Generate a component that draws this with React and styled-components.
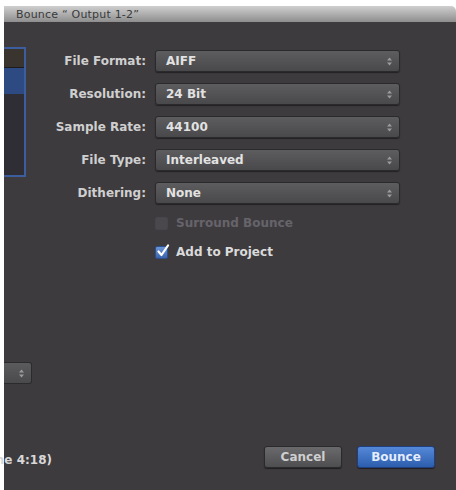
import React from 'react';
import styled, { createGlobalStyle } from 'styled-components';

const GlobalStyle = createGlobalStyle`
  html, body {
    margin: 0;
    padding: 0;
    background: #fff;
  }
  body {
    font-family: "DejaVu Sans", "Liberation Sans", sans-serif;
  }
`;

const Window = styled.div`
  width: 456px;
  height: 490px;
  padding: 6px 0 0 4px;
  box-sizing: border-box;
  display: flex;
  flex-direction: column;
  overflow: hidden;
`;

const TitleBar = styled.div`
  height: 16px;
  flex: none;
  background: linear-gradient(#cfcfcf, #8e8e8e);
  border-top-right-radius: 5px;
  display: flex;
  align-items: center;
  padding-left: 12px;
  font-size: 11px;
  letter-spacing: 0.2px;
  color: #3a3a3a;
`;

const Body = styled.div`
  flex: 1;
  background: #3e3b3f;
  display: flex;
`;

const LeftCol = styled.div`
  width: 50px;
  flex: none;
  display: flex;
  flex-direction: column;
  padding-top: 25px;
`;

const ListPanel = styled.div`
  width: 22px;
  height: 130px;
  box-sizing: border-box;
  border: 2px solid #3d5e9e;
  border-left: none;
  display: flex;
  flex-direction: column;
  background: #2f2e35;
`;

const ListHeader = styled.div`
  height: 18px;
  background: #3a342f;
  border-bottom: 1px solid #1e1c1c;
`;

const ListSelected = styled.div`
  height: 26px;
  background: #2d4a82;
`;

const MiniSelect = styled.div`
  margin-top: 185px;
  width: 28px;
  height: 22px;
  box-sizing: border-box;
  background: linear-gradient(#5b5a5c, #4a494b);
  border: 1px solid #2b2a2c;
  border-left: none;
  border-radius: 0 3px 3px 0;
  display: flex;
  align-items: center;
  justify-content: flex-end;
  padding-right: 6px;
`;

const TimeText = styled.div`
  margin-top: auto;
  margin-bottom: 23px;
  margin-left: -4px;
  width: 52px;
  font-size: 12px;
  font-weight: bold;
  color: #d8d8d8;
  white-space: nowrap;
  direction: rtl;
  overflow: hidden;
`;

const Main = styled.div`
  flex: 1;
  display: flex;
  flex-direction: column;
  padding-top: 28px;
`;

const Form = styled.div`
  display: grid;
  grid-template-columns: 92px 245px;
  column-gap: 9px;
  row-gap: 11px;
  align-items: center;
`;

const Label = styled.div`
  text-align: right;
  font-size: 12px;
  font-weight: bold;
  color: #cfcfcf;
  white-space: nowrap;
`;

const Select = styled.div`
  height: 22px;
  box-sizing: border-box;
  background: linear-gradient(#5d5c5e, #49484a);
  border: 1px solid #2a292b;
  border-radius: 3px;
  box-shadow: 0 1px 1px rgba(0, 0, 0, 0.45);
  display: flex;
  align-items: center;
  justify-content: space-between;
  padding: 0 6px 0 10px;
  font-size: 12px;
  font-weight: bold;
  color: #e2e2e2;
`;

const Checks = styled.div`
  display: flex;
  flex-direction: column;
  gap: 15px;
  margin-top: 12px;
  margin-left: 101px;
`;

const CheckRow = styled.div`
  display: flex;
  align-items: center;
  gap: 8px;
  font-size: 12px;
  font-weight: bold;
  color: ${p => (p.$disabled ? '#66646a' : '#dadada')};
`;

const Box = styled.div`
  width: 13px;
  height: 13px;
  box-sizing: border-box;
  border-radius: 2px;
  position: relative;
  border: 1px solid ${p => (p.$checked ? '#2c4f8e' : '#474549')};
  background: ${p => (p.$checked ? 'linear-gradient(#6d95d6, #3b64ad)' : '#4a484c')};
`;

const Tick = styled.svg`
  position: absolute;
  left: 0px;
  top: -3px;
`;

const Footer = styled.div`
  margin-top: auto;
  margin-bottom: 22px;
  display: flex;
  gap: 15px;
  padding-left: 210px;
`;

const Button = styled.div`
  width: 78px;
  height: 22px;
  box-sizing: border-box;
  border-radius: 3px;
  display: flex;
  align-items: center;
  justify-content: center;
  font-size: 12px;
  font-weight: bold;
  box-shadow: 0 1px 1px rgba(0, 0, 0, 0.5);
  color: ${p => (p.$primary ? '#e4ecff' : '#cfcfcf')};
  border: 1px solid ${p => (p.$primary ? '#1f3f7e' : '#2a292b')};
  background: ${p =>
    p.$primary ? 'linear-gradient(#5588d8, #2c5ead)' : 'linear-gradient(#6a696b, #4e4d4f)'};
`;

const Chevrons = () => (
  <svg width="7" height="11" viewBox="0 0 7 11">
    <path d="M1 4.5 L3.5 1.5 L6 4.5 Z" fill="#9c9b9d" />
    <path d="M1 6.5 L3.5 9.5 L6 6.5 Z" fill="#9c9b9d" />
  </svg>
);

const fields = [
  ['File Format:', 'AIFF'],
  ['Resolution:', '24 Bit'],
  ['Sample Rate:', '44100'],
  ['File Type:', 'Interleaved'],
  ['Dithering:', 'None'],
];

export default function App() {
  return (
    <>
      <GlobalStyle />
      <Window>
        <TitleBar>Bounce “ Output 1-2”</TitleBar>
        <Body>
          <LeftCol>
            <ListPanel>
              <ListHeader />
              <ListSelected />
            </ListPanel>
            <MiniSelect>
              <Chevrons />
            </MiniSelect>
            <TimeText>(Time 4:18)</TimeText>
          </LeftCol>
          <Main>
            <Form>
              {fields.map(([label, value]) => (
                <React.Fragment key={label}>
                  <Label>{label}</Label>
                  <Select>
                    {value}
                    <Chevrons />
                  </Select>
                </React.Fragment>
              ))}
            </Form>
            <Checks>
              <CheckRow $disabled>
                <Box />
                Surround Bounce
              </CheckRow>
              <CheckRow>
                <Box $checked>
                  <Tick width="14" height="14" viewBox="0 0 14 14">
                    <path
                      d="M2.5 7.5 L5.5 11 L12 1.5"
                      fill="none"
                      stroke="#ffffff"
                      strokeWidth="2.2"
                      strokeLinecap="round"
                      strokeLinejoin="round"
                    />
                  </Tick>
                </Box>
                Add to Project
              </CheckRow>
            </Checks>
            <Footer>
              <Button>Cancel</Button>
              <Button $primary>Bounce</Button>
            </Footer>
          </Main>
        </Body>
      </Window>
    </>
  );
}
